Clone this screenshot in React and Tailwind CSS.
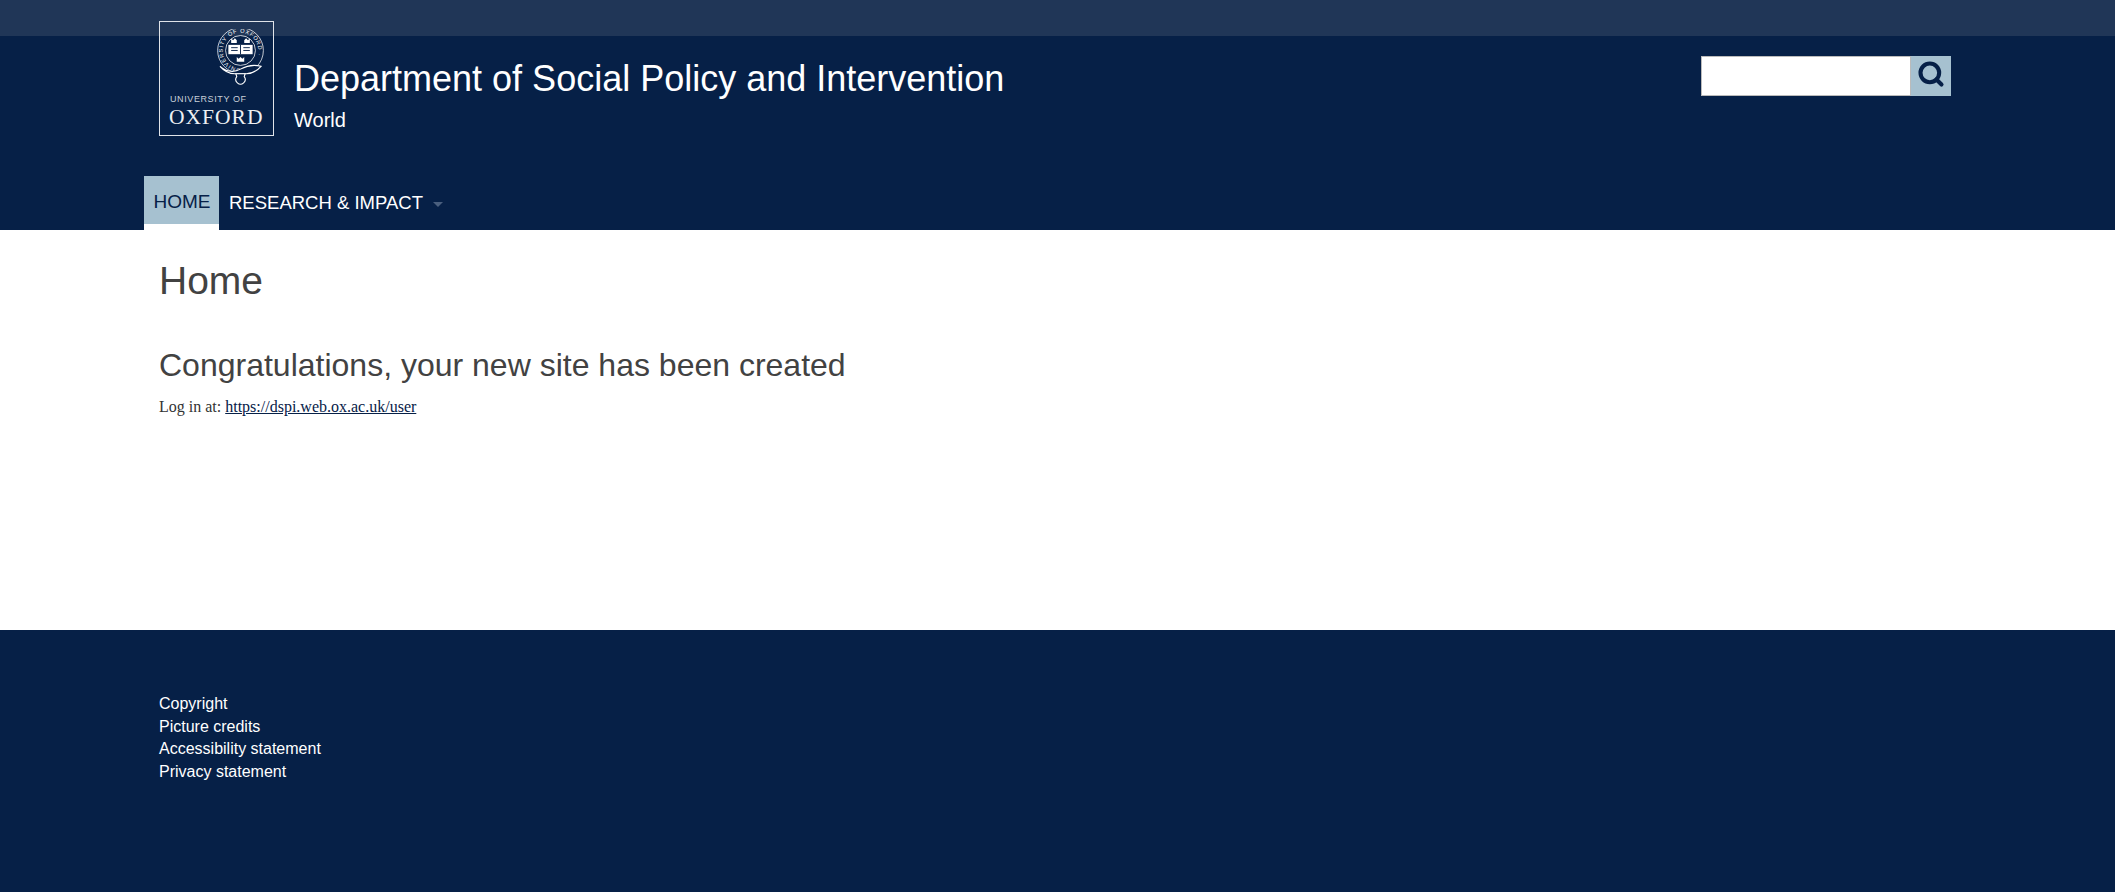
import React from 'react';
import { Search } from 'lucide-react';

const sans = { fontFamily: '"Liberation Sans", Arial, sans-serif' };

function Crest() {
    // oxford crest, drawn small so only the rough shapes read
    return (
        <svg viewBox="0 0 50 60" className="absolute left-[57px] top-[7px] w-[47px] h-[56px]" fill="none" stroke="#fff">
            <defs>
                <path id="ring" d="M25 42 A19 19 0 1 1 25.010 42" />
            </defs>
            <circle cx="25" cy="23" r="24.500" strokeWidth="0.8" />
            <circle cx="25" cy="23" r="16" strokeWidth="0.8" />
            <text fontSize="6" fill="#fff" stroke="none" fontFamily="Liberation Sans" letterSpacing="0.800">
                <textPath href="#ring">UNIVERSITY OF OXFORD ·</textPath>
            </text>
            <path d="M12 17 h26 v10 h-26 z" fill="#fff" stroke="none" />
            <path d="M25 17 v10 M15 20 h7 M15 23 h7 M28 20 h7 M28 23 h7" stroke="#062047" strokeWidth="1" />
            <path d="M15 15 v-5 l2 2 l2 -2 l2 2 v3 z M29 15 v-3 l2 -2 l2 2 l2 -2 v5 z M21 35 v-5 l2 2 l2 -2 l2 2 l2 -2 v5 z" fill="#fff" stroke="none" />
            <path d="M3 40 q11 9 22 3 q11 -6 22 -3 q-7 8 -16 8 h-12 q-9 0 -16 -8 z" fill="#062047" strokeWidth="1.200" />
            <path d="M20 48 h10 l-1 3 a5 5 0 1 1 -8 0 z" fill="#062047" strokeWidth="1.200" />
        </svg>
    );
}

function Logo() {
    return (
        <div className="relative w-[115px] h-[115px] border border-[#dfe3e9] shrink-0">
            <Crest />
            <div className="absolute left-[10px] top-[71px] text-[9px] leading-3 tracking-[0.6px] text-[#c9d0da]" style={sans}>UNIVERSITY OF</div>
            <div className="absolute left-[9px] top-[83px] text-[21.500px] leading-6 tracking-[1px] text-[#eef0f3]" style={{ fontFamily: '"Liberation Serif", serif' }}>OXFORD</div>
        </div>
    );
}

function App() {
    return (
        <div className="bg-white min-h-[892px] flex flex-col" style={sans}>
            <header className="bg-[#062047] h-[230px]">
                <div className="bg-[#203657] h-9"></div>
                <div className="flex justify-between pl-[159px] pr-[164px] -mt-[15px] h-[155px]">
                    <div className="flex items-start">
                        <Logo />
                        <div className="ml-5 text-white">
                            <div className="text-[36px] leading-[42px] mt-[37px]">Department of Social Policy and Intervention</div>
                            <div className="text-[20px] leading-6 mt-[8px]">World</div>
                        </div>
                    </div>
                    <div className="flex mt-[35px] h-10">
                        <input className="w-[210px] h-10 bg-white border border-[#bbbbbb]" />
                        <button className="w-[40px] h-10 bg-[#a6c1d0] flex items-center justify-center text-[#062047]">
                            <Search size={28} strokeWidth={3.500} className="-mt-1" />
                        </button>
                    </div>
                </div>
                <nav className="flex pl-[144px] h-[54px] items-start">
                    <a className="w-[75px] h-[54px] bg-[#a6c1d0] border-b-[6px] border-white text-[#062047] text-[19px] flex items-center justify-center pt-1 pl-px">HOME</a>
                    <a className="ml-[10px] text-white text-[18.500px] leading-[54px] h-[54px] flex items-center">
                        RESEARCH &amp; IMPACT
                        <span className="ml-[10px] mt-[3px] border-x-[5px] border-x-transparent border-t-[5px] border-t-[#4a5f7e]"></span>
                    </a>
                </nav>
            </header>
            <main className="h-[400px] px-[159px] text-[#424242]">
                <h1 className="text-[39px] leading-[46px] pt-[28px] h-[100px] box-content">Home</h1>
                <h2 className="text-[32px] leading-9 -mt-[11px]">Congratulations, your new site has been created</h2>
                <p className="text-[16px] leading-6 mt-[12px] text-[#333333]" style={{ fontFamily: '"Liberation Serif", serif' }}>
                    Log in at: <a className="text-[#062047] underline">https://dspi.web.ox.ac.uk/user</a>
                </p>
            </main>
            <footer className="bg-[#062047] flex-1 h-[262px] pt-[63px] pl-[159px] text-white text-[16px] leading-[22.500px]">
                <div>Copyright</div>
                <div>Picture credits</div>
                <div>Accessibility statement</div>
                <div>Privacy statement</div>
            </footer>
        </div>
    );
}

export default App;
